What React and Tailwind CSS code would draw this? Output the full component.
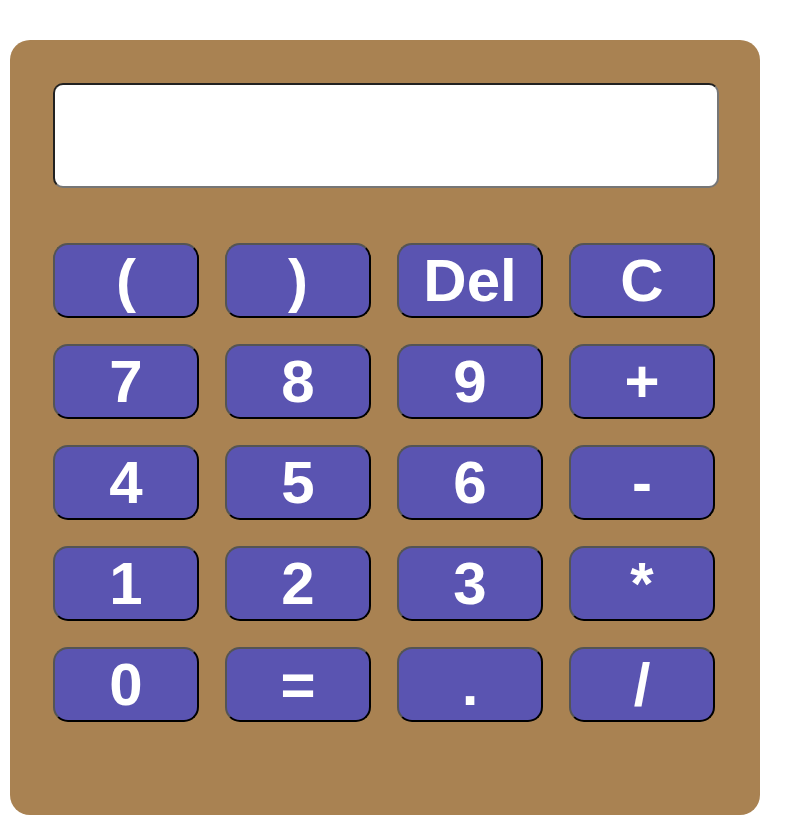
import { useState } from "react";

const keys = ["(", ")", "Del", "C", "7", "8", "9", "+", "4", "5", "6", "-", "1", "2", "3", "*", "0", "=", ".", "/"];

const App = () => {
  const [expr, setExpr] = useState("");

  const press = (k) => {
    if (k === "C") setExpr("");
    else if (k === "Del") setExpr(expr.slice(0, -1));
    else if (k === "=") {
      try {
        // eslint-disable-next-line no-new-func
        setExpr(String(Function("return (" + expr + ")")()));
      } catch (err) {
        setExpr("Error");
      }
    } else setExpr(expr + k);
  };

  return (
    <div className="min-h-screen bg-white pt-[40px] pl-[10px]" style={{ fontFamily: '"Liberation Sans", Arial, sans-serif' }}>
      <div className="w-[750px] h-[775px] rounded-[20px] bg-[#a98252] pt-[43px] pl-[43px]">
        {/* display */}
        <input
          type="text"
          readOnly
          value={expr}
          className="block w-[666px] h-[105px] rounded-[10px] bg-white border-2 border-[#767676] [border-style:inset] px-4 text-right text-5xl outline-none"
        />

        {/* keys */}
        <div className="grid grid-cols-[repeat(4,146px)] gap-x-[26px] gap-y-[26px] mt-[55px]">
          {keys.map((k) => (
            <button
              key={k}
              onClick={() => press(k)}
              className="h-[75px] w-[146px] rounded-[15px] bg-[#5a54b1] text-white font-bold text-[60px] leading-none border-2 border-black [border-style:outset] flex items-center justify-center"
            >
              {k}
            </button>
          ))}
        </div>
      </div>
    </div>
  );
};

export default App;
